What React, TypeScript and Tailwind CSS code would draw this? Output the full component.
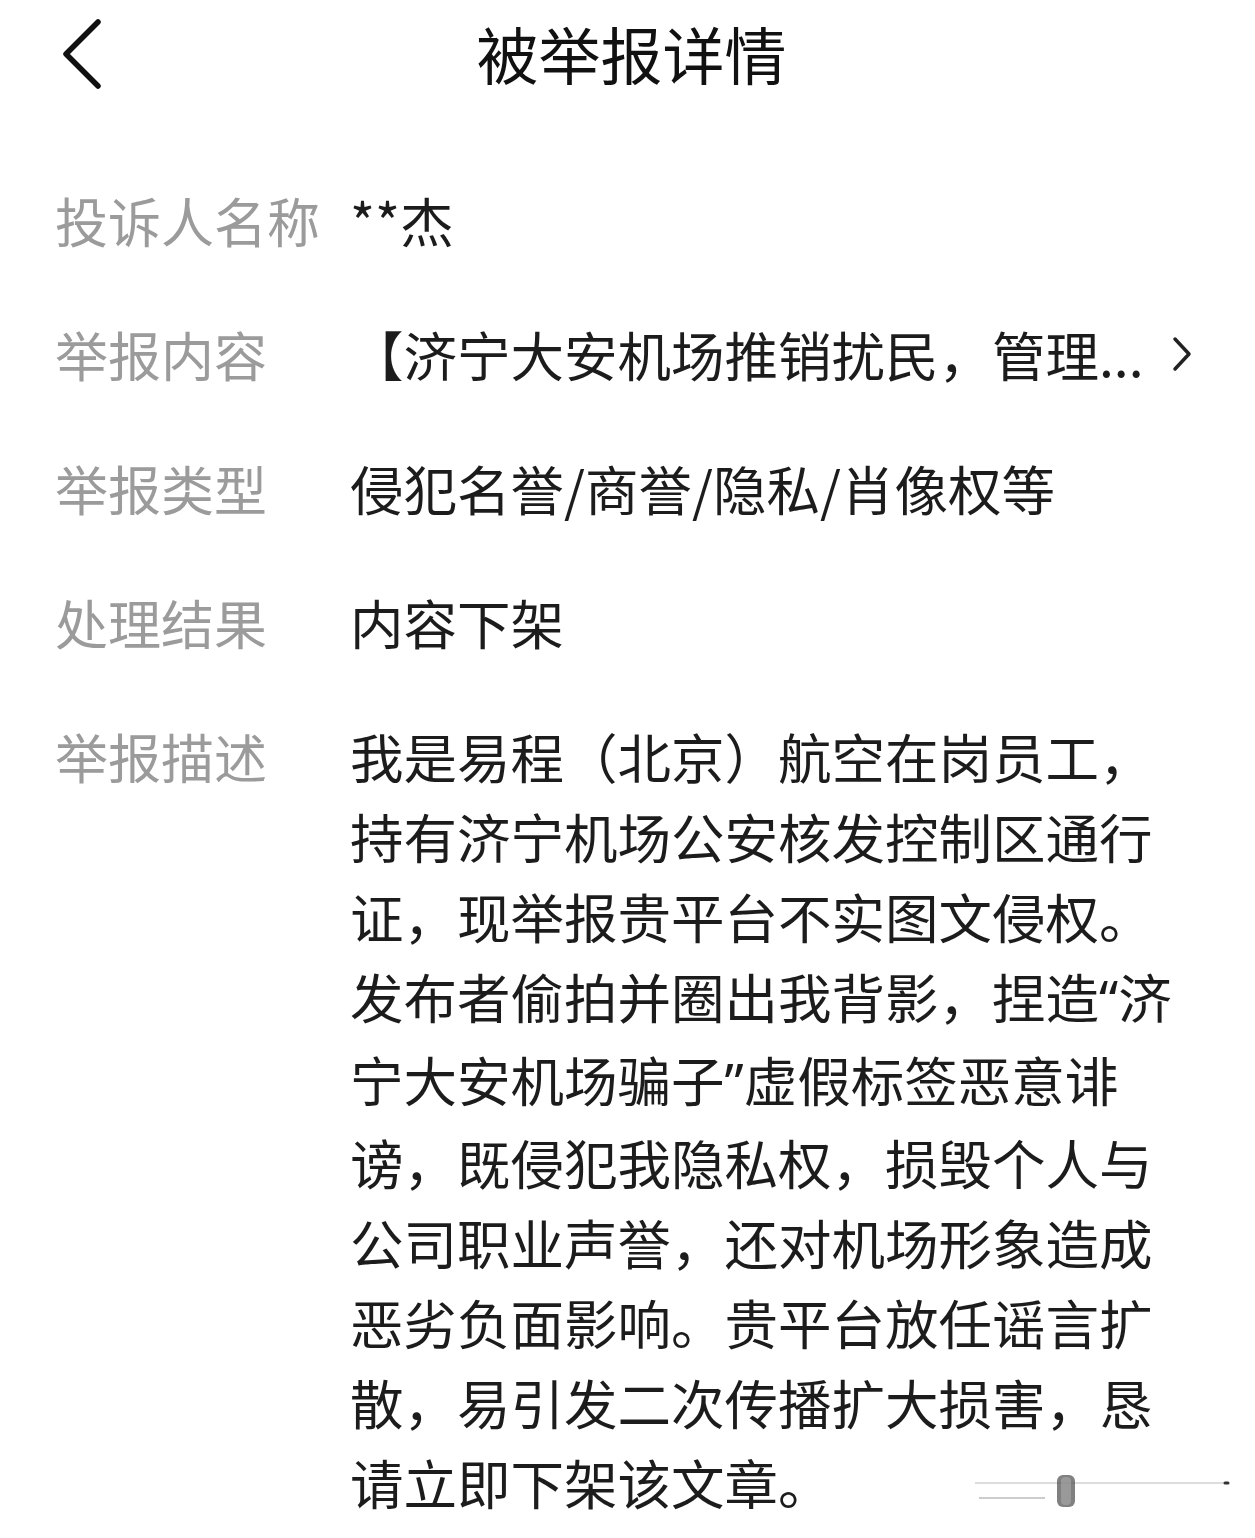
import React from 'react';

// Report detail page: header with back arrow, then label/value rows
const Q = ({ c }: { c: string }) => (
  <span style={{ fontFamily: '"Noto Sans", sans-serif' }}>{c}</span>
);

const rows: { label: string; value: React.ReactNode[]; link?: boolean }[] = [
  { label: '投诉人名称', value: ['**杰'] },
  { label: '举报内容', value: ['【济宁大安机场推销扰民，管理...'], link: true },
  { label: '举报类型', value: ['侵犯名誉/商誉/隐私/肖像权等'] },
  { label: '处理结果', value: ['内容下架'] },
  {
    label: '举报描述',
    value: [
      '我是易程（北京）航空在岗员工，',
      '持有济宁机场公安核发控制区通行',
      '证，现举报贵平台不实图文侵权。',
      <>发布者偷拍并圈出我背影，捏造<Q c="“" />济</>,
      <>宁大安机场骗子<Q c="”" />虚假标签恶意诽</>,
      '谤，既侵犯我隐私权，损毁个人与',
      '公司职业声誉，还对机场形象造成',
      '恶劣负面影响。贵平台放任谣言扩',
      '散，易引发二次传播扩大损害，恳',
      '请立即下架该文章。',
    ],
  },
];

export default function App() {
  return (
    <div
      className="relative w-[1255px] h-[1538px] bg-white overflow-hidden"
      style={{ fontFamily: '"Noto Sans CJK SC", "Noto Sans", sans-serif' }}
    >
      {/* Header */}
      <div className="relative h-[110px] flex items-center justify-center">
        <button className="absolute left-[58px] top-[18px] w-[48px] h-[72px] flex items-center justify-center">
          <svg width="44" height="72" viewBox="0 0 44 72" fill="none">
            <path d="M38 4 L6 36 L38 68" stroke="#111" strokeWidth="5.5" strokeLinecap="round" strokeLinejoin="round" />
          </svg>
        </button>
        <h1 className="text-[62px] leading-none font-normal text-[#111] ml-[8px] mt-[-4px]">被举报详情</h1>
      </div>

      {/* Rows */}
      <div className="pt-[70px] flex flex-col gap-[54px]">
        {rows.map((row) => (
          <div key={row.label} className="flex pl-[55px] pr-[40px]">
            <div className="w-[295px] shrink-0 text-[53px] leading-[80px] text-[#9b9b9b]">{row.label}</div>
            <div className="flex-1 flex items-start">
              <div className="flex-1 text-[53.5px] leading-[80px] text-[#1c1c1c]">
                {row.value.map((line, i) => (
                  <div key={i} className="whitespace-nowrap">{line}</div>
                ))}
              </div>
              {row.link && (
                <div className="h-[80px] flex items-center mr-[22px]">
                  <svg width="22" height="36" viewBox="0 0 22 36" fill="none">
                    <path d="M4 3 L18 18 L4 33" stroke="#222" strokeWidth="3.5" strokeLinecap="round" strokeLinejoin="round" />
                  </svg>
                </div>
              )}
            </div>
          </div>
        ))}
      </div>

      {/* Faint watermark at bottom right */}
      <svg className="absolute left-[975px] top-[1465px]" width="260" height="50" viewBox="0 0 260 50" fill="none">
        <line x1="0" y1="18" x2="250" y2="18" stroke="#ddd" strokeWidth="2" />
        <line x1="250" y1="18" x2="253" y2="18" stroke="#333" strokeWidth="3" strokeLinecap="round" />
        <line x1="4" y1="33" x2="70" y2="33" stroke="#ccc" strokeWidth="2" />
        <rect x="82" y="10" width="18" height="32" rx="6" fill="#555" opacity="0.75" />
        <rect x="86" y="12" width="10" height="28" rx="4" fill="#aaa" opacity="0.6" />
      </svg>
    </div>
  );
}
